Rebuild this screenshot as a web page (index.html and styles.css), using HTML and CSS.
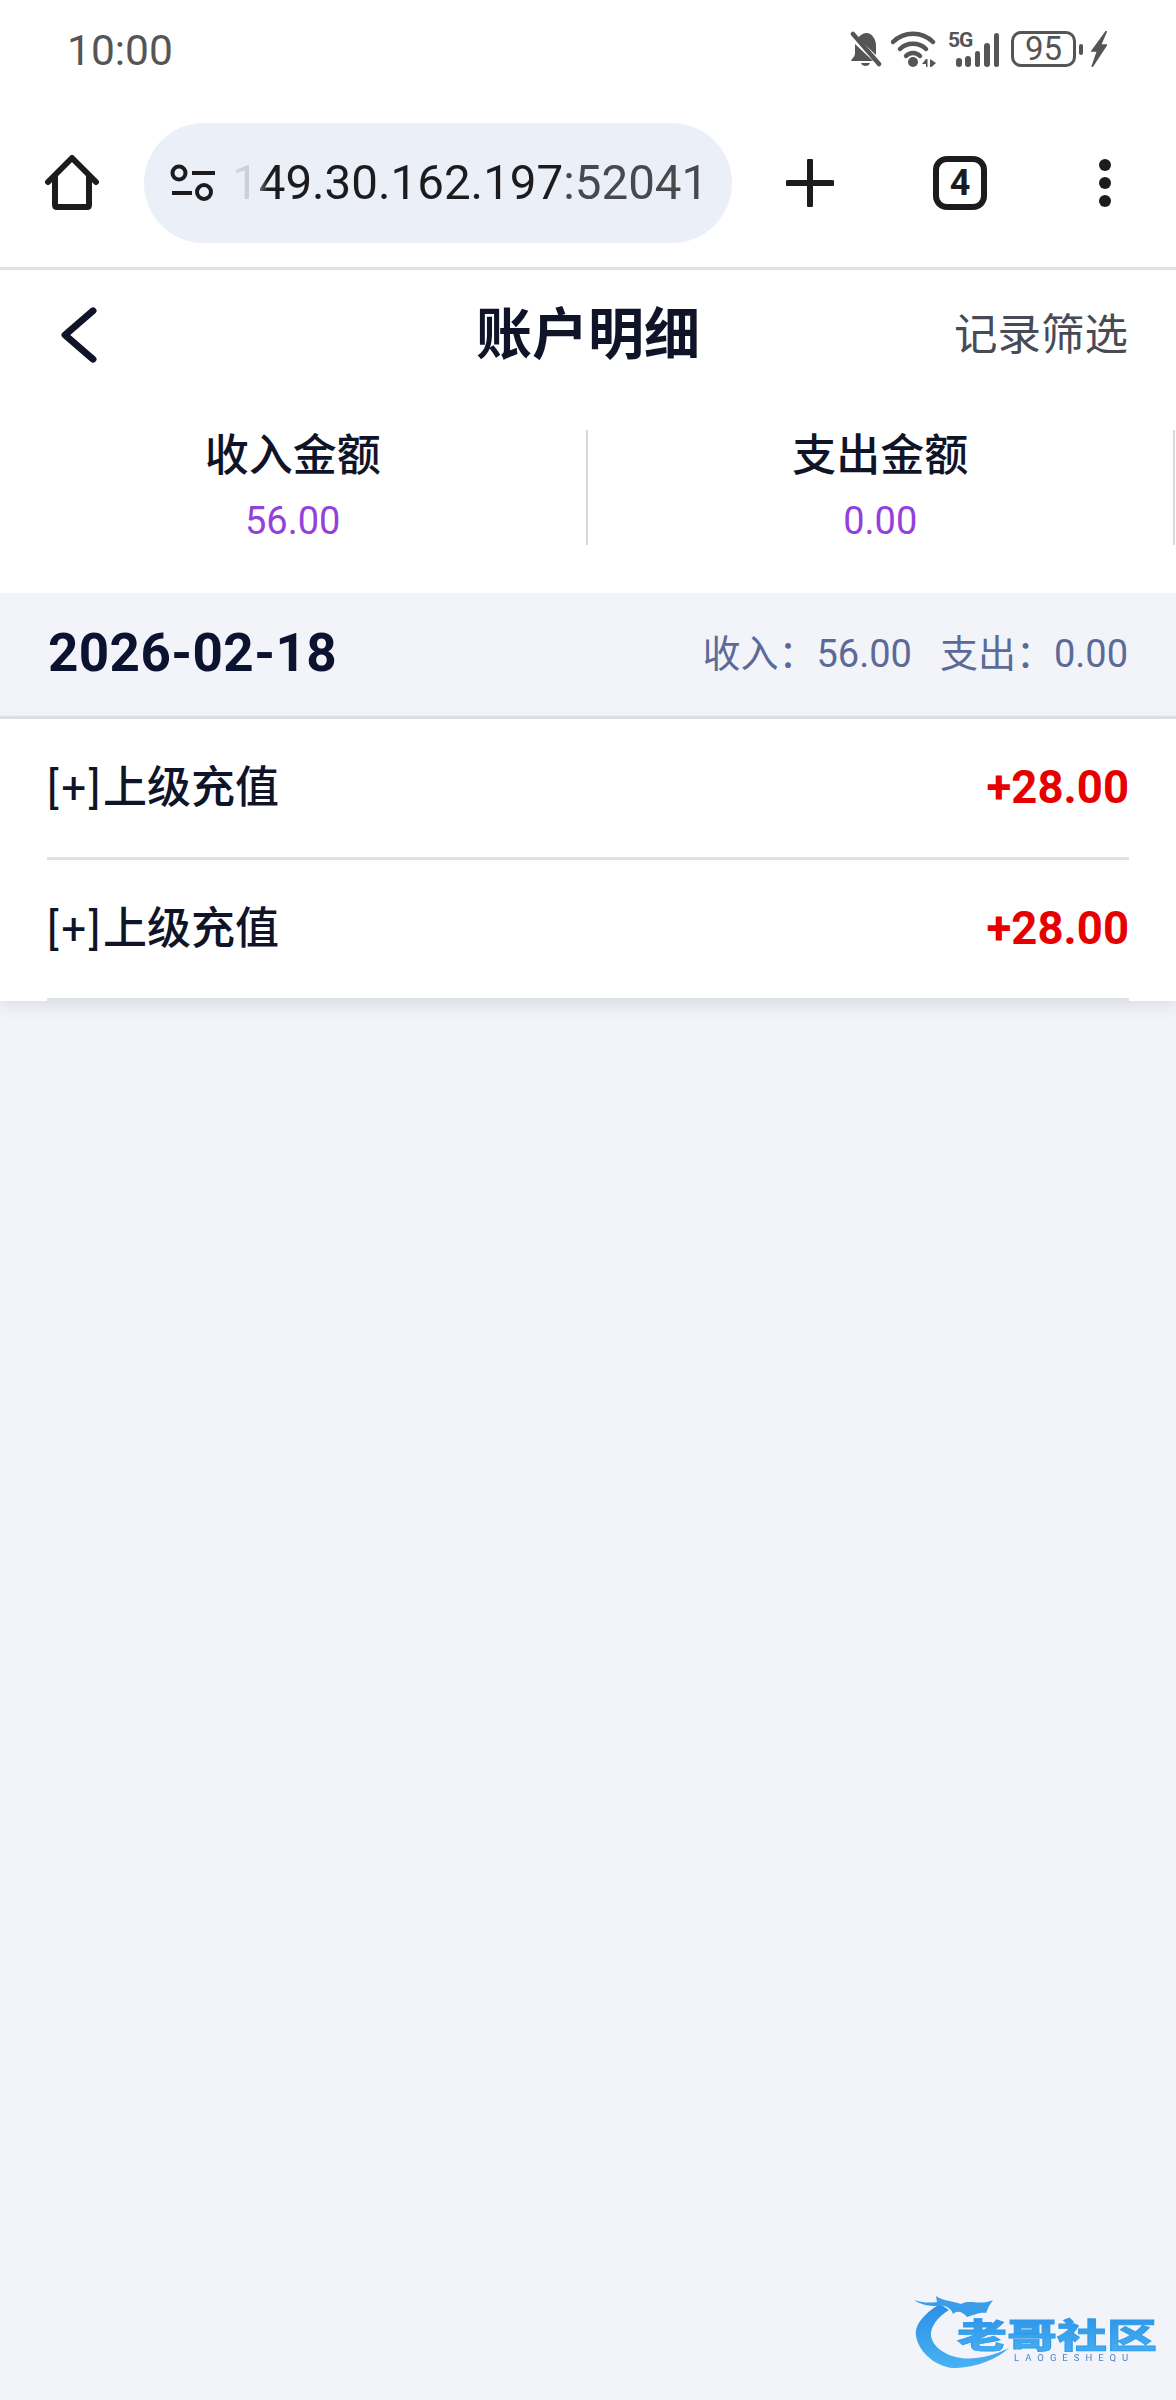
FILE: index.html
```html
<!DOCTYPE html>
<html lang="zh-CN">
<head>
    <meta charset="UTF-8">
    <meta name="viewport" content="width=device-width, initial-scale=1.0">
    <title>账户明细</title>
    <link rel="stylesheet" href="styles.css">
</head>
<body>

<div class="status-bar">
    <span class="clock">10:00</span>
    <div class="status-icons">
        <svg class="ic-bell" width="32" height="36" viewBox="0 0 32 36">
            <path d="M8 7 C10 4 13 2 17 2 C23 3 26 9 26 15 L26 24 Z M5 13 L23 30 H1 C2 27 5 26 5 22 Z" fill="#555"/>
            <path d="M11 32 H20 C19 36 12 36 11 32 Z" fill="#555"/>
            <path d="M3 3 L29 33" stroke="#555" stroke-width="4.5" stroke-linecap="round"/>
        </svg>
        <svg class="ic-wifi" width="46" height="36" viewBox="0 0 46 36">
            <g fill="none" stroke="#555" stroke-width="4.5" stroke-linecap="round">
                <path d="M2 11 C13 0 31 0 42 11"/>
                <path d="M9 18 C16 11 28 11 35 18"/>
                <path d="M15 25 C19 21 25 21 29 25"/>
            </g>
            <circle cx="22" cy="31" r="5" fill="#555"/>
            <path d="M35 28 L31 33 H35 V36 H36.5 V28 Z M39 28 V36 H40.5 L45 32 Z" fill="#555"/>
        </svg>
        <div class="signal">
            <span class="net">5G</span>
            <i class="bar b1"></i><i class="bar b2"></i><i class="bar b3"></i><i class="bar b4"></i><i class="bar b5"></i>
        </div>
        <div class="battery"><span>95</span></div>
        <i class="battery-nub"></i>
        <svg class="ic-bolt" width="16" height="36" viewBox="0 0 16 36">
            <path d="M15.5 0 L1 20 H6.5 L1 36 L15.5 14 H9.5 L15.5 0 Z" fill="#555" stroke="#555" stroke-width="1.5"/>
        </svg>
    </div>
</div>

<div class="browser-bar">
    <svg class="ic-home" width="56" height="56" viewBox="0 0 56 56">
        <path d="M4 27 L28 3 L52 27 M11 22 V50 Q11 52 13 52 H43 Q45 52 45 50 V22" fill="none" stroke="#1c1c1e" stroke-width="6" stroke-linecap="round" stroke-linejoin="round"/>
    </svg>
    <div class="url-pill">
        <svg class="ic-tune" width="46" height="38" viewBox="0 0 46 38">
            <g fill="none" stroke="#1c1c1e" stroke-width="4">
                <circle cx="9" cy="9" r="6.5"/>
                <circle cx="34" cy="28" r="7"/>
                <path d="M22 9 H45"/>
                <path d="M2 29 H22"/>
            </g>
        </svg>
        <div class="url-text"><span>149.30.162.197</span><span class="url-port">:52041</span></div>
    </div>
    <svg class="ic-plus" width="48" height="48" viewBox="0 0 48 48">
        <path d="M24 2 V46 M2 24 H46" stroke="#1c1c1e" stroke-width="6" stroke-linecap="round"/>
    </svg>
    <div class="tab-count">4</div>
    <div class="more-dots"><i></i><i></i><i></i></div>
</div>

<div class="page-head">
    <svg class="ic-back" width="38" height="56" viewBox="0 0 38 60" preserveAspectRatio="none">
        <path d="M33 4 L5 30 L33 56" fill="none" stroke="#0f1429" stroke-width="7" stroke-linecap="round" stroke-linejoin="round"/>
    </svg>
    <h1>账户明细</h1>
    <a class="filter-link">记录筛选</a>
</div>

<div class="summary">
    <div class="summary-item">
        <div class="summary-label">收入金额</div>
        <div class="summary-value">56.00</div>
    </div>
    <div class="summary-item">
        <div class="summary-label">支出金额</div>
        <div class="summary-value">0.00</div>
    </div>
</div>

<div class="day-head">
    <div class="day-date">2026-02-18</div>
    <div class="day-totals"><span>收入：56.00</span><span>支出：0.00</span></div>
</div>

<div class="record-list">
    <div class="record">
        <span class="record-name"><span class="record-tag">[+]</span>上级充值</span>
        <span class="record-amount">+28.00</span>
    </div>
    <div class="record">
        <span class="record-name"><span class="record-tag">[+]</span>上级充值</span>
        <span class="record-amount">+28.00</span>
    </div>
</div>

<svg class="watermark" width="263" height="90" viewBox="0 0 263 90">
    <defs>
        <linearGradient id="wmBlue" x1="0" y1="0" x2="0" y2="1">
            <stop offset="0" stop-color="#2a8fe6"/>
            <stop offset="1" stop-color="#49b2f2"/>
        </linearGradient>
    </defs>
    <path d="M27 12 C10 22 1 34 3 44 C6 62 26 77 44 76 C64 75 84 67 96 56 C80 64 62 68 48 66 C34 64 20 56 18 44 C17 34 26 24 36 18 Z" fill="url(#wmBlue)"/>
    <path d="M1 8 C10 11 18 11 24 10 L23 4 C30 9 40 9 48 12 C56 7 68 14 80 8 L76 14 L73 21 C66 20 62 23 54 25 C50 20 44 18 40 22 C38 16 32 12 24 14 C16 14 8 13 1 8 Z" fill="#3a9dea"/>
    <text class="wm-title" transform="scale(1.47,1)" x="30" y="56" fill="url(#wmBlue)" stroke="#2f9bec" stroke-width=".8">老哥社区</text>
    <text class="wm-sub" x="101" y="69" fill="#4a86c8">LAOGESHEQU</text>
</svg>

</body>
</html>
```

FILE: styles.css
```css
* { margin: 0; padding: 0; box-sizing: border-box; }
html, body { height: 2400px; }
body {
    position: relative; overflow: hidden;
    font-family: Roboto, "Noto Sans CJK SC", sans-serif;
    background: #f2f4f9; color: #0f1429;
}

/* phone status bar */
.status-bar {
    height: 122px; padding: 31px 69px 0 67px; background: #fff;
    display: flex; justify-content: space-between; align-items: flex-start;
}
.clock { font-size: 42.5px; line-height: 40px; color: #555; }
.status-icons { display: flex; align-items: center; height: 36px; }
.ic-bell { margin-right: 9px; }
.ic-wifi { margin-right: 11px; }
.signal { position: relative; display: flex; align-items: flex-end; gap: 3.8px; width: 50px; height: 35px; margin-right: 13px; padding-left: 8px; }
.net { position: absolute; left: 0; top: -2px; font-size: 21px; line-height: 20px; font-weight: 700; letter-spacing: -1px; color: #555; }
.bar { display: block; flex: none; width: 5.6px; background: #555; border-radius: 3px; }
.b1 { height: 9px; }
.b2 { height: 11px; }
.b3 { height: 16px; }
.b4 { height: 24px; }
.b5 { height: 34px; }
.battery {
    width: 65px; height: 36px; border: 3px solid #555; border-radius: 10px;
    font-size: 33px; line-height: 30px; text-align: center; color: #555;
}
.battery-nub { width: 4px; height: 11px; margin: 0 8px 0 3px; background: #555; border-radius: 2px; }

/* browser toolbar */
.browser-bar {
    height: 148px; padding: 1px 0 24px 0; background: #fff; border-bottom: 3px solid #e2e2e4;
    display: flex; align-items: center; position: relative;
}
.ic-home { margin-left: 44px; margin-right: 44px; flex: none; }
.url-pill {
    width: 588px; height: 120px; background: #ebf0f8; border-radius: 60px;
    display: flex; align-items: center; padding-left: 26px; flex: none;
}
.url-text {
    margin-left: 16px; white-space: nowrap; display: flex;
    font-size: 47.5px; color: #1c1c1e;
    -webkit-mask-image: linear-gradient(90deg, rgba(0,0,0,.1) 0, rgba(0,0,0,.16) 18px, #000 36px);
    mask-image: linear-gradient(90deg, rgba(0,0,0,.1) 0, rgba(0,0,0,.16) 18px, #000 36px);
}
.url-port { color: #48494d; }
.ic-plus { margin-left: 54px; flex: none; }
.tab-count {
    width: 54px; height: 54px; margin-left: 99px; border: 6px solid #1c1c1e; border-radius: 14px;
    font-size: 36px; line-height: 42px; font-weight: 700; text-align: center; color: #1c1c1e; flex: none;
}
.more-dots { margin-left: 112px; display: flex; flex-direction: column; gap: 6px; }
.more-dots i { display: block; width: 12px; height: 12px; border-radius: 50%; background: #1c1c1e; }

/* page header */
.page-head {
    height: 125px; background: #fff; position: relative;
    display: flex; align-items: center; justify-content: center;
}
.ic-back { position: absolute; left: 60px; top: 37px; }
.page-head h1 { font-size: 56px; line-height: 64px; font-weight: 700; margin-top: 5px; }
.filter-link { position: absolute; right: 48px; top: 34px; font-size: 43.5px; line-height: 64px; color: #484b56; }

/* totals */
.summary { height: 198px; padding-top: 35px; background: #fff; display: flex; align-items: flex-start; }
.summary-item { width: 587.5px; height: 115px; padding-top: 2px; border-right: 2px solid #d4dbe5; text-align: center; }
.summary-label { font-size: 44px; line-height: 48px; font-weight: 500; }
.summary-value { margin-top: 18px; font-size: 38px; line-height: 46px; color: #9440db; }

/* day group */
.day-head {
    height: 126px; padding: 0 48px 4px; background: #f2f4f9; border-bottom: 3px solid #e0e1e5;
    display: flex; align-items: center; justify-content: space-between;
}
.day-date { font-size: 53px; font-weight: 700; letter-spacing: .4px; color: #0c1330; }
.day-totals { display: flex; gap: 28px; margin-top: -5px; font-size: 38px; color: #5b6a96; }

/* records */
.record-list { background: #fff; padding: 0 47px; box-shadow: 0 6px 14px rgba(120, 125, 150, .16); }
.record {
    height: 141px; border-bottom: 3px solid #e0e1e5;
    display: flex; align-items: center; justify-content: space-between; padding-bottom: 1px;
}
.record-name { font-size: 44px; font-weight: 500; margin-top: -8px; }
.record-tag { letter-spacing: 2.6px; font-weight: 400; }
.record-amount { font-size: 45.5px; font-weight: 700; color: #e60000; }

/* watermark over the page */
.watermark { position: absolute; left: 913px; top: 2292px; filter: blur(.7px); overflow: visible; }
.wm-title { font-size: 34px; font-weight: 900; font-family: "Noto Sans CJK SC", sans-serif; }
.wm-sub { font-size: 9.5px; letter-spacing: 6px; font-family: Roboto, sans-serif; }
```
